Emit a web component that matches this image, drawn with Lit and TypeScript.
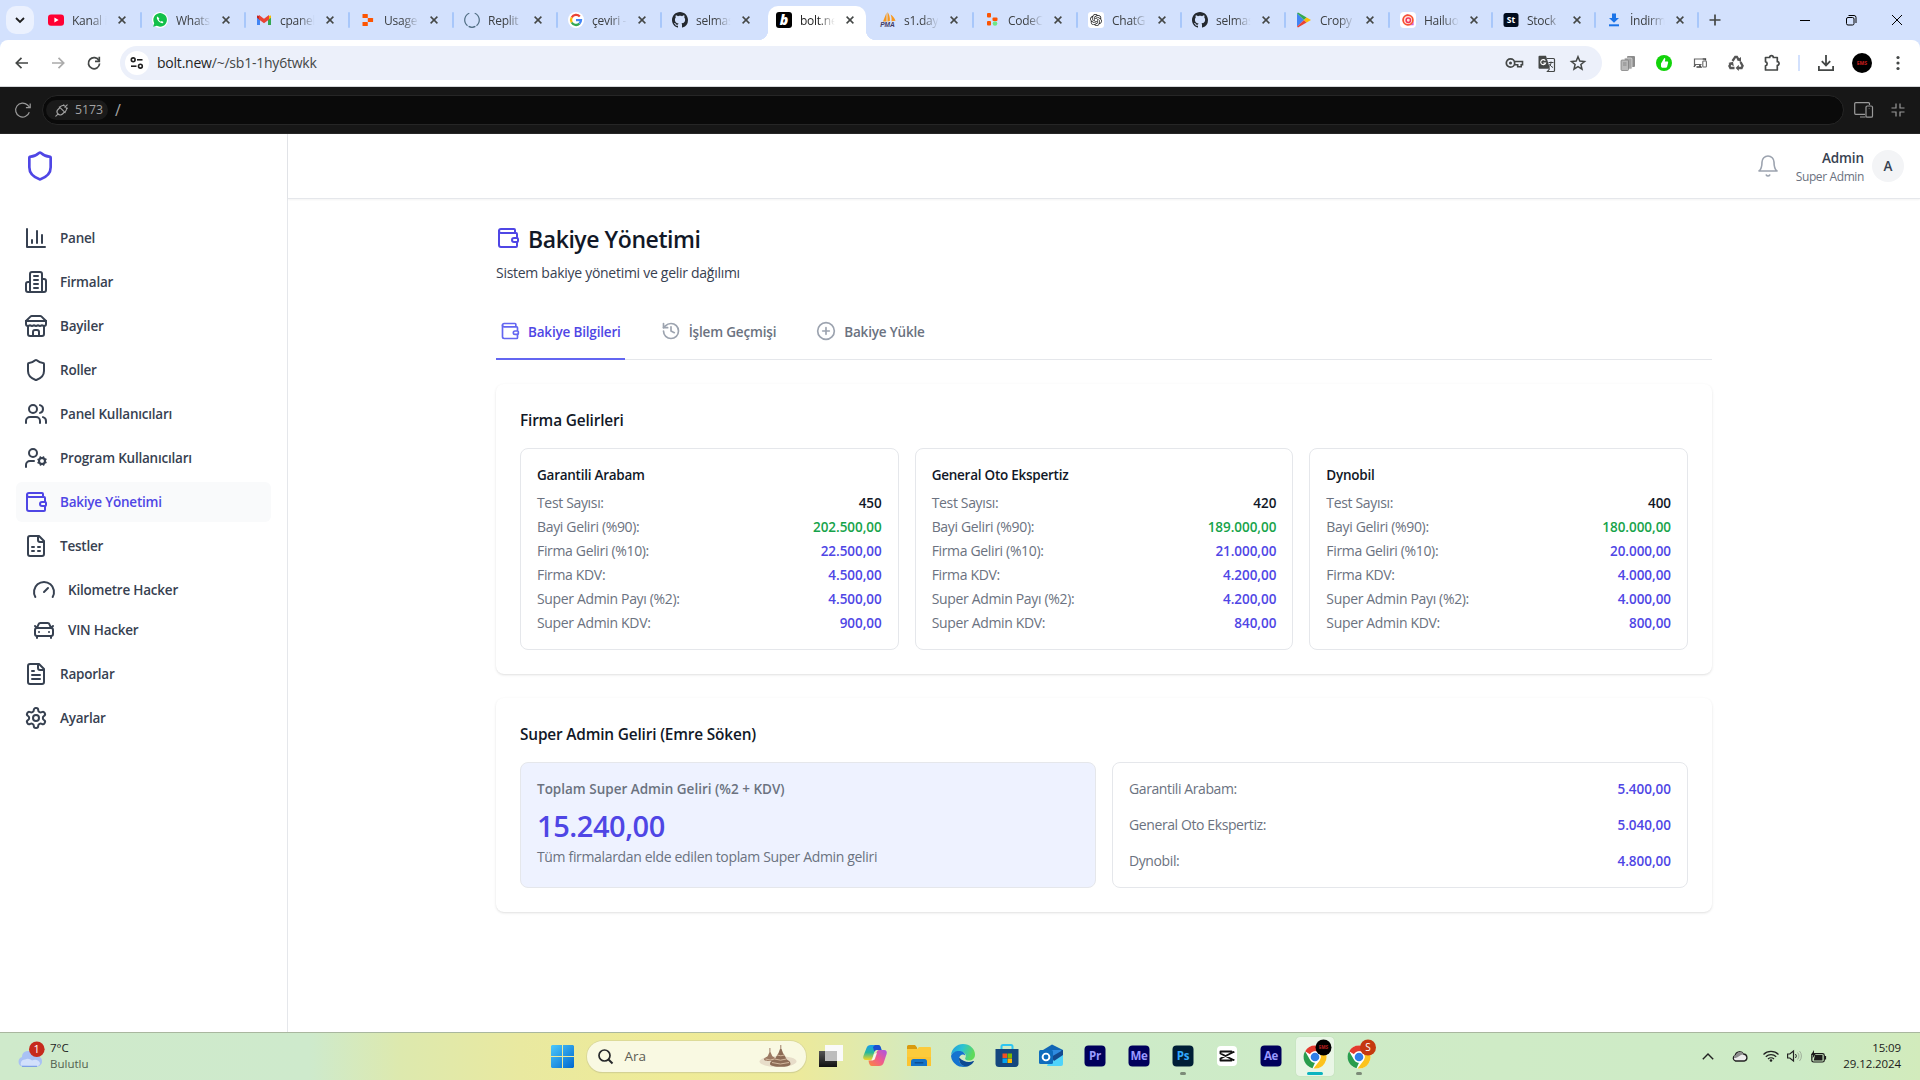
import { LitElement, html, svg, css, nothing } from "lit";
import { customElement, property } from "lit/decorators.js";

/* ---------- line icons (24px grid) ---------- */
const lines: Record<string, any> = {
  wallet: svg`<path d="M19 7V4a1 1 0 0 0-1-1H5a2 2 0 0 0 0 4h15a1 1 0 0 1 1 1v4h-3a2 2 0 0 0 0 4h3a1 1 0 0 0 1-1v-2a1 1 0 0 0-1-1"/><path d="M3 5v14a2 2 0 0 0 2 2h15a1 1 0 0 0 1-1v-4"/>`,
  chart: svg`<path d="M3 3v18h18"/><path d="M18 17V9"/><path d="M13 17V5"/><path d="M8 17v-3"/>`,
  building: svg`<path d="M6 22V4a2 2 0 0 1 2-2h8a2 2 0 0 1 2 2v18Z"/><path d="M6 12H4a2 2 0 0 0-2 2v6a2 2 0 0 0 2 2h2"/><path d="M18 9h2a2 2 0 0 1 2 2v9a2 2 0 0 1-2 2h-2"/><path d="M10 6h4M10 10h4M10 14h4M10 18h4"/>`,
  store: svg`<path d="m2 7 4.41-4.41A2 2 0 0 1 7.83 2h8.34a2 2 0 0 1 1.42.59L22 7"/><path d="M4 12v8a2 2 0 0 0 2 2h12a2 2 0 0 0 2-2v-8"/><path d="M15 22v-4a2 2 0 0 0-2-2h-2a2 2 0 0 0-2 2v4"/><path d="M2 7h20"/><path d="M22 7v3a2 2 0 0 1-2 2a2.7 2.7 0 0 1-1.59-.63.7.7 0 0 0-.82 0A2.7 2.7 0 0 1 16 12a2.7 2.7 0 0 1-1.59-.63.7.7 0 0 0-.82 0A2.7 2.7 0 0 1 12 12a2.7 2.7 0 0 1-1.59-.63.7.7 0 0 0-.82 0A2.7 2.7 0 0 1 8 12a2.7 2.7 0 0 1-1.59-.63.7.7 0 0 0-.82 0A2.7 2.7 0 0 1 4 12a2 2 0 0 1-2-2V7"/>`,
  shield: svg`<path d="M20 13c0 5-3.5 7.5-7.66 8.95a1 1 0 0 1-.67-.01C7.5 20.5 4 18 4 13V6a1 1 0 0 1 1-1c2 0 4.5-1.2 6.24-2.72a1.17 1.17 0 0 1 1.52 0C14.51 3.81 17 5 19 5a1 1 0 0 1 1 1z"/>`,
  users: svg`<path d="M16 21v-2a4 4 0 0 0-4-4H6a4 4 0 0 0-4 4v2"/><circle cx="9" cy="7" r="4"/><path d="M22 21v-2a4 4 0 0 0-3-3.87"/><path d="M16 3.13a4 4 0 0 1 0 7.75"/>`,
  userCog: svg`<circle cx="18" cy="15" r="3"/><circle cx="9" cy="7" r="4"/><path d="M10 15H6a4 4 0 0 0-4 4v2"/><path d="m21.7 16.4-.9-.3M15.2 13.9l-.9-.3M16.6 18.7l.3-.9M19.1 12.2l.3-.9M19.6 18.7l-.4-1M16.8 12.3l-.4-1M14.3 16.6l1-.4M20.7 13.8l1-.4"/>`,
  sheet: svg`<path d="M15 2H6a2 2 0 0 0-2 2v16a2 2 0 0 0 2 2h12a2 2 0 0 0 2-2V7Z"/><path d="M14 2v4a2 2 0 0 0 2 2h4"/><path d="M8 13h2M14 13h2M8 17h2M14 17h2"/>`,
  gauge: svg`<path d="m12 14 4-4"/><path d="M3.34 19a10 10 0 1 1 17.32 0"/>`,
  car: svg`<path d="m21 8-2 2-1.5-3.7A2 2 0 0 0 15.646 5H8.4a2 2 0 0 0-1.903 1.257L5 10 3 8"/><path d="M7 14h.01M17 14h.01"/><rect width="18" height="8" x="3" y="10" rx="2"/><path d="M5 18v2M19 18v2"/>`,
  file: svg`<path d="M15 2H6a2 2 0 0 0-2 2v16a2 2 0 0 0 2 2h12a2 2 0 0 0 2-2V7Z"/><path d="M14 2v4a2 2 0 0 0 2 2h4"/><path d="M10 9H8M16 13H8M16 17H8"/>`,
  cog: svg`<path d="M12.22 2h-.44a2 2 0 0 0-2 2v.18a2 2 0 0 1-1 1.73l-.43.25a2 2 0 0 1-2 0l-.15-.08a2 2 0 0 0-2.73.73l-.22.38a2 2 0 0 0 .73 2.73l.15.1a2 2 0 0 1 1 1.72v.51a2 2 0 0 1-1 1.74l-.15.09a2 2 0 0 0-.73 2.73l.22.38a2 2 0 0 0 2.73.73l.15-.08a2 2 0 0 1 2 0l.43.25a2 2 0 0 1 1 1.73V20a2 2 0 0 0 2 2h.44a2 2 0 0 0 2-2v-.18a2 2 0 0 1 1-1.73l.43-.25a2 2 0 0 1 2 0l.15.08a2 2 0 0 0 2.73-.73l.22-.39a2 2 0 0 0-.73-2.73l-.15-.08a2 2 0 0 1-1-1.74v-.5a2 2 0 0 1 1-1.74l.15-.09a2 2 0 0 0 .73-2.73l-.22-.38a2 2 0 0 0-2.73-.73l-.15.08a2 2 0 0 1-2 0l-.43-.25a2 2 0 0 1-1-1.73V4a2 2 0 0 0-2-2z"/><circle cx="12" cy="12" r="3"/>`,
  bell: svg`<path d="M6 8a6 6 0 0 1 12 0c0 7 3 9 3 9H3s3-2 3-9"/><path d="M10.3 21a1.94 1.94 0 0 0 3.4 0"/>`,
  history: svg`<path d="M3 12a9 9 0 1 0 9-9 9.75 9.75 0 0 0-6.74 2.74L3 8"/><path d="M3 3v5h5"/><path d="M12 7v5l4 2"/>`,
  plusCircle: svg`<circle cx="12" cy="12" r="10"/><path d="M8 12h8M12 8v8"/>`,
};
const line = (name: string, size = 24, width = 2) => html`<svg width=${size} height=${size} viewBox="0 0 24 24" fill="none" stroke="currentColor" stroke-width=${width} stroke-linecap="round" stroke-linejoin="round">${lines[name]}</svg>`;

/* ---------- free-form glyphs, each with its own grid ---------- */
const glyph = (w: number, h: number, body: any) => html`<svg width=${w} height=${h} viewBox="0 0 ${w} ${h}" fill="none">${body}</svg>`;

const github = glyph(16, 16, svg`<path fill="#24292f" d="M8 0C3.58 0 0 3.58 0 8c0 3.54 2.29 6.53 5.47 7.59.4.07.55-.17.55-.38 0-.19-.01-.82-.01-1.49-2.01.37-2.53-.49-2.69-.94-.09-.23-.48-.94-.82-1.13-.28-.15-.68-.52-.01-.53.63-.01 1.08.58 1.23.82.72 1.21 1.87.87 2.33.66.07-.52.28-.87.51-1.07-1.78-.2-3.64-.89-3.64-3.95 0-.87.31-1.59.82-2.15-.08-.2-.36-1.02.08-2.12 0 0 .67-.21 2.2.82.64-.18 1.32-.27 2-.27s1.36.09 2 .27c1.53-1.04 2.2-.82 2.2-.82.44 1.1.16 1.92.08 2.12.51.56.82 1.27.82 2.15 0 3.07-1.87 3.75-3.65 3.95.29.25.54.73.54 1.48 0 1.07-.01 1.93-.01 2.2 0 .21.15.46.55.38A8.01 8.01 0 0 0 16 8c0-4.42-3.58-8-8-8z"/>`);

const favicons: Record<string, any> = {
  youtube: glyph(16, 16, svg`<rect y="2.4" width="16" height="11.4" rx="3" fill="#f03"/><path d="M6.4 5.6v5l4.2-2.5z" fill="#fff"/>`),
  whatsapp: glyph(16, 16, svg`<circle cx="8" cy="8" r="8" fill="#fff"/><path d="M1.2 14.8l1-3.6a6.8 6.8 0 1 1 2.6 2.6z" fill="#12c04a"/><path d="M5.6 4.6c-.9.6-1 1.8-.3 3 1 1.9 2.4 3.1 4.2 3.5 1 .2 1.7-.4 1.9-1.2l-1.7-.9-.8.8c-1-.4-1.8-1.2-2.2-2.2l.7-.8z" fill="#fff"/>`),
  gmail: glyph(16, 16, svg`<path d="M1 4v9h3V7z" fill="#4285f4"/><path d="M12 7v6h3V4z" fill="#34a853"/><path d="M1 3.5v2.3L4 8V4z" fill="#c5221f"/><path d="M12 4v4l3-2.2V3.5z" fill="#fbbc04"/><path d="M3 3l5 3.8L13 3v4.6l-5 3.7-5-3.7z" fill="#ea4335"/>`),
  usage: glyph(16, 16, svg`<g fill="#fd5402"><rect x="2.5" y="2" width="5.3" height="4" rx=".6"/><rect x="7.8" y="6" width="5.3" height="4" rx=".6"/><rect x="2.5" y="10" width="5.3" height="4" rx=".6"/></g>`),
  spinner: glyph(16, 16, svg`<path d="M5.3 1.2a7.3 7.3 0 0 0-1.8 12.5M10.7 1.2a7.3 7.3 0 0 1 1.8 12.5M4.6 14.4a7.3 7.3 0 0 0 6.8 0" stroke="#4d6b80" stroke-width="1.2"/>`),
  google: glyph(16, 16, svg`<circle cx="8" cy="8" r="8" fill="#fff"/><g fill="none" stroke-width="2.3"><path d="M11.8 4.5A5 5 0 0 0 3.7 5.5" stroke="#ea4335"/><path d="M3.7 5.5a5 5 0 0 0 0 5" stroke="#fbbc05"/><path d="M3.7 10.5a5 5 0 0 0 7.7 1.2" stroke="#34a853"/><path d="M8 8.1h5a5 5 0 0 1-1.6 3.6" stroke="#4285f4"/></g>`),
  github,
  bolt: glyph(16, 16, svg`<rect width="16" height="16" rx="3" fill="#000"/><text x="8" y="13" text-anchor="middle" font-family="Open Sans" font-style="italic" font-weight="800" font-size="14" fill="#fff">b</text>`),
  pma: glyph(16, 16, svg`<path d="M6.5.8L3 9.5h3.5zM7.5 0v9.5l2.4-.4C10.2 5 9 2 7.5 0zM10.5 2.5c1 2 1.3 4 1 6.7l4-.5c-1-3-3-5-5-6.2z" fill="#f8981d"/><text x="7.5" y="15.4" text-anchor="middle" font-family="Liberation Sans" font-style="italic" font-weight="700" font-size="6.6" fill="#3f3a66">PMA</text>`),
  codec: glyph(16, 16, svg`<g fill="#fd5402"><rect x="3" y="1" width="4" height="4.5" rx="1"/><rect x="8.5" y="5.5" width="5" height="3.5" rx="1"/><rect x="3" y="9" width="4" height="4.5" rx="1"/></g><circle cx="11" cy="11.5" r="2.3" fill="#6ee787"/>`),
  openai: html`<svg width="16" height="16" viewBox="-4 -4 32 32"><rect x="-4" y="-4" width="32" height="32" rx="6" fill="#fff"/><path fill="#222" d="M22.2819 9.8211a5.9847 5.9847 0 0 0-.5157-4.9108 6.0462 6.0462 0 0 0-6.5098-2.9A6.0651 6.0651 0 0 0 4.9807 4.1818a5.9847 5.9847 0 0 0-3.9977 2.9 6.0462 6.0462 0 0 0 .7427 7.0966 5.98 5.98 0 0 0 .511 4.9107 6.051 6.051 0 0 0 6.5146 2.9001A5.9847 5.9847 0 0 0 13.2599 24a6.0557 6.0557 0 0 0 5.7718-4.2058 5.9894 5.9894 0 0 0 3.9977-2.9001 6.0557 6.0557 0 0 0-.7475-7.0729zm-9.022 12.6081a4.4755 4.4755 0 0 1-2.8764-1.0408l.1419-.0804 4.7783-2.7582a.7948.7948 0 0 0 .3927-.6813v-6.7369l2.02 1.1686a.071.071 0 0 1 .038.052v5.5826a4.504 4.504 0 0 1-4.4945 4.4944zm-9.6607-4.1254a4.4708 4.4708 0 0 1-.5346-3.0137l.142.0852 4.783 2.7582a.7712.7712 0 0 0 .7806 0l5.8428-3.3685v2.3324a.0804.0804 0 0 1-.0332.0615L9.74 19.9502a4.4992 4.4992 0 0 1-6.1408-1.6464zM2.3408 7.8956a4.485 4.485 0 0 1 2.3655-1.9728V11.6a.7664.7664 0 0 0 .3879.6765l5.8144 3.3543-2.0201 1.1685a.0757.0757 0 0 1-.071 0l-4.8303-2.7865A4.504 4.504 0 0 1 2.3408 7.872zm16.5963 3.8558L13.1038 8.364 15.1192 7.2a.0757.0757 0 0 1 .071 0l4.8303 2.7913a4.4944 4.4944 0 0 1-.6765 8.1042v-5.6772a.79.79 0 0 0-.407-.667zm2.0107-3.0231l-.142-.0852-4.7735-2.7818a.7759.7759 0 0 0-.7854 0L9.409 9.2297V6.8974a.0662.0662 0 0 1 .0284-.0615l4.8303-2.7866a4.4992 4.4992 0 0 1 6.6802 4.66zM8.3065 12.863l-2.02-1.1638a.0804.0804 0 0 1-.038-.0567V6.0742a4.4992 4.4992 0 0 1 7.3757-3.4537l-.142.0805L8.704 5.459a.7948.7948 0 0 0-.3927.6813zm1.0976-2.3654l2.602-1.4998 2.6069 1.4998v2.9994l-2.5974 1.4997-2.6067-1.4997Z"/></svg>`,
  play: glyph(16, 16, svg`<path d="M1 1.2v13.6L8 8z" fill="#4285f4"/><path d="M1 1.2L8 8l2.6-2.6L2 .6z" fill="#34a853"/><path d="M1 14.8L8 8l2.6 2.6L2 15.4z" fill="#ea4335"/><path d="M10.6 5.4L8 8l2.6 2.6L15 8z" fill="#fbbc04"/>`),
  hailuo: glyph(16, 16, svg`<rect width="16" height="16" rx="4" fill="#fff"/><path d="M8 2.3a5.5 5.5 0 1 0 5.6 5.5v5.5H8" fill="#d65be0"/><circle cx="8" cy="8" r="4.9" stroke="#f8532d" stroke-width="1.7" fill="#ffe3dc"/><circle cx="8.3" cy="8.3" r="2.2" stroke="#f0355b" stroke-width="1.5"/>`),
  stock: glyph(16, 16, svg`<rect y="1" x=".5" width="15" height="14" rx="2.5" fill="#000b1d"/><text x="8" y="11.4" text-anchor="middle" font-family="Open Sans" font-weight="700" font-size="8.5" fill="#fff">St</text>`),
  download: glyph(16, 16, svg`<path d="M6 1.5h4V6h3l-5 4.8L3 6h3z" fill="#1a73e8"/><path d="M3 12.3h10v2H3z" fill="#1a73e8"/>`),
};

const chrome = svg`<circle cx="12" cy="12" r="11.5" fill="#fff"/><path d="M12 .5a11.5 11.5 0 0 1 10 5.8H12a5.8 5.8 0 0 0-5 3L2.1 6.2A11.5 11.5 0 0 1 12 .5z" fill="#e33b2e"/><path d="M2.1 6.2L7 14.8a5.8 5.8 0 0 0 5 3l-2.5 5.4A11.5 11.5 0 0 1 2.1 6.2z" fill="#2a9d4d"/><path d="M22 6.3A11.5 11.5 0 0 1 10.5 23.4L17 14.9a5.8 5.8 0 0 0 0-5.9l-2-2.7z" fill="#fcc31e"/><circle cx="12" cy="12" r="5.4" fill="#fff"/><circle cx="12" cy="12" r="4.3" fill="#2f7de9"/>`;

const adobe = (label: string, bg: string, fg: string) => glyph(22, 22, svg`<rect x=".5" y=".5" width="21" height="21" rx="4" fill=${bg}/><text x="11" y="15" text-anchor="middle" font-family="Open Sans" font-weight="700" font-size="11.5" fill=${fg} letter-spacing="-.3">${label}</text>`);

const apps: any[] = [
  { icon: glyph(24, 24, svg`<defs><linearGradient id="tv" x1="0" y1="0" x2="0" y2="1"><stop stop-color="#555"/><stop offset="1" stop-color="#111"/></linearGradient></defs><rect y="7" width="18" height="16" fill="url(#tv)"/><rect x="6" y="1" width="18" height="16" fill="#fafafa"/><rect x="6" y="7" width="12" height="10" fill="#bdbdbd"/>`) },
  { icon: glyph(24, 24, svg`<defs><linearGradient id="cpa" x1="0" y1="0" x2="0" y2="1"><stop stop-color="#1a9bf0"/><stop offset=".5" stop-color="#27b89a"/><stop offset="1" stop-color="#f6d520"/></linearGradient><linearGradient id="cpb" x1="1" y1="0" x2="0" y2="1"><stop stop-color="#a855e8"/><stop offset=".5" stop-color="#ef5b8d"/><stop offset="1" stop-color="#fb8a3c"/></linearGradient></defs><path d="M8 1h7c2 0 2.5 1.5 3 3l.5 2H14c-2 0-2.5 1-3 3l-1.5 5c-.5 1.5-1.2 2-3 2H3c-2.5 0-3.3-1.7-2.6-4L3.5 4C4.2 2 5.5 1 8 1z" fill="url(#cpa)"/><path d="M12 1h3c2 0 2.5 1.5 3 3l.5 2H14c-1.5 0-2.2.6-2.7 2L10 3z" fill="#1c4fd0"/><path d="M16 22H9c-2 0-2.5-1.5-3-3l-.5-2.5H9c2 0 2.5-1 3-3L13.8 8c.5-1.5 1.2-2 3-2H21c2.5 0 3.3 1.7 2.6 4l-3 9c-.7 2-2.1 3-4.6 3z" fill="url(#cpb)"/><path d="M11 10l3-1-2.3 6.5-3 1z" fill="#fff" opacity=".75"/>`) },
  { icon: glyph(24, 24, svg`<path d="M0 2.5A1.5 1.5 0 0 1 1.5 1H8l2 2.5V6H0z" fill="#d99a0d"/><path d="M0 5h10l2-2h11a1 1 0 0 1 1 1v18H0z" fill="#fccb3c"/><path d="M0 13h24v9H0z" fill="#fbc02a" opacity=".6"/><path d="M4 22v-4.500A2.500 2.500 0 0 1 6.500 15h11a2.500 2.500 0 0 1 2.500 2.500V22z" fill="#1473c8"/><rect x="7.500" y="18" width="9" height="1.500" rx=".7" fill="#0d4f94"/>`) },
  { icon: glyph(24, 24, svg`<defs><linearGradient id="ed" x1="0" y1="0" x2="1" y2=".3"><stop stop-color="#2199dd"/><stop offset=".5" stop-color="#2cc3d2"/><stop offset="1" stop-color="#5fda5a"/></linearGradient></defs><path d="M0 11C1 4 6 0 12 0c7 0 12 5 12 10.500 0 4-3 6-6 6-3.500 0-4.500-1.500-3.500-3 1.500-3-1.500-6-5.500-6C4.500 7.500 1.500 9 0 11z" fill="url(#ed)"/><path d="M0 12c1-3 4-5 8-5 3.500 0 6.200 2 6.200 4.500-2-2-6.200-.5-6.200 3.500 0 4.500 4 7.800 8.500 7A12 12 0 0 1 0 12z" fill="#1473d0"/><path d="M8.200 13.500c-1 4.500 2.800 10 9 8.700 2.600-1 4.500-2.600 5.700-4.600.3-.6-.2-.8-.7-.5-4.200 2-10.400.7-14-3.600z" fill="#0c4a94"/>`) },
  { icon: glyph(24, 24, svg`<path d="M6.500 6V2.500A1.500 1.500 0 0 1 8 1h8a1.500 1.500 0 0 1 1.500 1.500V6" stroke="#2ec5f2" stroke-width="2"/><path d="M.5 5h23v14.500A3.500 3.500 0 0 1 20 23H4a3.500 3.500 0 0 1-3.500-3.500z" fill="#14477e"/><path d="M7.500 9.500H12V14H7.500z" fill="#f25022"/><path d="M12.500 9.500H17V14h-4.500z" fill="#7fba00"/><path d="M7.500 14.500H12V19H7.500z" fill="#00a4ef"/><path d="M12.500 14.500H17V19h-4.500z" fill="#ffb900"/>`) },
  { icon: glyph(24, 24, svg`<path d="M4 6l9-5.500L24 6v4H4z" fill="#1066b5"/><path d="M4 6h18v9H4z" fill="#2f8be0"/><path d="M10 17L24 7.500V20a2 2 0 0 1-2 2H8z" fill="#4fd3fa"/><path d="M12 13l12-7v5l-9 6z" fill="#144a8e"/><rect y="6" width="14" height="14" rx="1.500" fill="#0f6cbd"/><circle cx="7" cy="13" r="3.400" stroke="#fff" stroke-width="1.900"/>`) },
  { icon: adobe("Pr", "#00005b", "#9999ff") },
  { icon: adobe("Me", "#00005b", "#9999ff") },
  { icon: adobe("Ps", "#001e36", "#31a8ff"), running: true },
  { icon: glyph(22, 22, svg`<rect x="1" y="1" width="20" height="20" rx="4" fill="#fff"/><path d="M15.500 8V6.500h-11v2l13 6.500v-1M15.500 14v1.500h-11v-2l13-6.500v1" stroke="#111" stroke-width="1.900" stroke-linejoin="round"/>`) },
  { icon: adobe("Ae", "#00005b", "#9999ff") },
  { icon: glyph(30, 30, svg`<g transform="translate(3 4)">${chrome}</g><circle cx="23.500" cy="6.500" r="8" fill="#000"/><text x="23.500" y="8.300" text-anchor="middle" font-family="Open Sans" font-weight="800" font-size="4.500" fill="#a01c1c">EMS</text>`), active: true },
  { icon: glyph(30, 30, svg`<g transform="translate(3 4)">${chrome}</g><circle cx="24" cy="6.500" r="8" fill="#c5380f"/><text x="24" y="10.200" text-anchor="middle" font-family="Open Sans" font-size="10" fill="#fff">S</text>`), running: true },
];

const tabs = [
  ["youtube", "Kanal i"], ["whatsapp", "Whats"], ["gmail", "cpanel"], ["usage", "Usage"], ["spinner", "Replit"],
  ["google", "çeviri -"], ["github", "selmas"], ["bolt", "bolt.ne"], ["pma", "s1.day"], ["codec", "CodeC"], ["openai", "ChatG"],
  ["github", "selmas"], ["play", "Cropy"], ["hailuo", "Hailuo"], ["stock", "Stock"], ["download", "İndirm"],
];

const fonts = css`
  :host { box-sizing: border-box; font-family: "Open Sans", "Noto Sans", sans-serif; font-stretch: 92%; }
  * { box-sizing: border-box; }
  svg { display: block; flex: none; overflow: visible; }
`;

@customElement("browser-chrome")
class BrowserChrome extends LitElement {
  static styles = [fonts, css`
    :host { display: block; flex: none; }
    .strip { height: 40px; background: #d3e1fd; display: flex; padding-left: 6px; align-items: flex-end; }
    .search { width: 28px; height: 28px; border-radius: 10px; background: #ebf1fe; display: grid; place-items: center; align-self: center; margin-right: 4px; }
    .tab { position: relative; width: 104px; height: 34px; display: flex; align-items: center; padding: 0 0 6px 10px; color: #3d4043; flex: none; }
    .tab.slim { width: 103px; }
    .label { width: 37px; margin: 1px 0 0 8px; font-size: 12px; line-height: 16px; overflow: hidden; white-space: nowrap; letter-spacing: -.25px; -webkit-mask-image: linear-gradient(90deg, #000 50%, transparent 94%); mask-image: linear-gradient(90deg, #000 50%, transparent 94%); }
    .x { margin-left: 8.5px; }
    .bar { width: 2px; height: 16px; background: #a8c7fa; margin-left: auto; border-radius: 1px; }
    .active { color: #1f1f1f; }
    .active::before { content: ""; position: absolute; left: 2px; right: 4px; top: 0; bottom: 0; background: #fff; border-radius: 10px 10px 0 0; }
    .active::after { content: ""; position: absolute; left: -8px; right: -6px; bottom: 0; height: 10px; background: radial-gradient(circle at 0 0, transparent 10px, #fff 10.5px) left / 10px 10px no-repeat, radial-gradient(circle at 100% 0, transparent 10px, #fff 10.5px) right / 10px 10px no-repeat; }
    .active > * { position: relative; }
    .plus { height: 34px; padding: 8px 0 0 10px; }
    .window { margin-left: auto; display: flex; height: 40px; }
    .window span { width: 46px; display: grid; place-items: center; }
    .tools { background: #d3e1fd; }
    .toolbar { height: 47px; background: #fff; border-radius: 8px 8px 0 0; border-bottom: 1px solid #d5d7da; display: flex; align-items: center; padding: 0 4px; }
    .btn { width: 36px; display: grid; place-items: center; flex: none; }
    .omni { flex: 1; height: 34px; border-radius: 17px; background: #ecf0fa; display: flex; align-items: center; padding: 0 8px 0 5px; margin: 0 8px 0 8px; }
    .site { width: 24px; height: 24px; border-radius: 50%; background: #fff; display: grid; place-items: center; margin-right: 8px; }
    .url { font-size: 14px; line-height: 20px; margin-top: -1px; color: #444746; flex: 1; letter-spacing: -.22px; }
    .url b { font-weight: 400; color: #1f1f1f; }
    .in { width: 32px; display: grid; place-items: center; }
    .sep { width: 2px; height: 16px; background: #d3e1fd; margin: 0 8px; }
    .preview { height: 47px; background: #171717; border-bottom: 1px solid #262626; display: flex; align-items: center; padding: 0 5px 0 10px; color: #9a9a9a; }
    .address { flex: 1; height: 30px; border-radius: 15px; border: 1px solid #262626; background: #0a0a0a; display: flex; align-items: center; padding-left: 3px; margin: 0 3px 0 7px; }
    .port { width: 62px; height: 20px; border-radius: 10px; background: #1a1a1a; display: flex; align-items: center; padding-left: 9px; gap: 7px; font-size: 12.3px; color: #a3a3a3; }
    .port span { margin-top: -1px; }
    .slash { margin: -1px 0 0 7px; font-size: 16px; color: #a3a3a3; }
    .pbtn { width: 25px; display: grid; place-items: center; }
    .pbtn.wide { width: 34px; }
  `];
  render() {
    const k = "#444746";
    return html`
      <div class="strip">
        <div class="search">${glyph(10, 6, svg`<path d="M1 1l4 4 4-4" stroke="#1f1f1f" stroke-width="1.8"/>`)}</div>
        ${tabs.map(([icon, label], i) => html`<div class="tab ${i === 7 ? "active" : ""} ${i > 12 ? "slim" : ""}">
          ${favicons[icon]}<span class="label">${label}</span>
          <span class="x">${glyph(8, 8, svg`<path d="M.6.6l6.8 6.8M7.4.6L.6 7.4" stroke=${k} stroke-width="1.5"/>`)}</span>
          ${i === 6 || i === 7 ? nothing : html`<span class="bar"></span>`}</div>`)}
        <div class="plus">${glyph(12, 12, svg`<path d="M6 .5v11M.5 6h11" stroke=${k} stroke-width="1.7"/>`)}</div>
        <div class="window">
          <span>${glyph(10, 10, svg`<path d="M0 5.5h10" stroke="#000"/>`)}</span>
          <span>${glyph(10, 10, svg`<rect x=".5" y="2.5" width="7.5" height="7.5" rx="1.5" stroke="#000"/><path d="M2.5.5H8A2 2 0 0 1 10 2.5V8" stroke="#000"/>`)}</span>
          <span>${glyph(10, 10, svg`<path d="M0 0l10 10M10 0L0 10" stroke="#000"/>`)}</span>
        </div>
      </div>
      <div class="tools"><div class="toolbar">
        <div class="btn">${glyph(14, 12, svg`<path d="M13 6H1.5M6.5.8L1.3 6l5.2 5.2" stroke=${k} stroke-width="1.7"/>`)}</div>
        <div class="btn">${glyph(14, 12, svg`<path d="M1 6h11.5M7.5.8L12.7 6l-5.2 5.2" stroke="#ababab" stroke-width="1.7"/>`)}</div>
        <div class="btn">${glyph(14, 14, svg`<path d="M12 4.6A5.6 5.6 0 1 0 12.6 7.5" stroke=${k} stroke-width="1.7"/><path d="M12.3.8v4.5H8" stroke=${k} stroke-width="1.7"/>`)}</div>
        <div class="omni">
          <span class="site">${glyph(14, 12, svg`<g stroke="#1f1f1f" stroke-width="1.6"><circle cx="3.2" cy="2.8" r="1.9"/><path d="M7 2.8h5.5"/><circle cx="10.4" cy="9.2" r="1.9"/><path d="M1 9.2h5.5"/></g>`)}</span>
          <span class="url"><b>bolt.new</b>/~/sb1-1hy6twkk</span>
          <span class="in">${glyph(18, 12, svg`<circle cx="5.5" cy="6" r="4.2" stroke=${k} stroke-width="1.7"/><circle cx="5.5" cy="6" r="1.5" fill=${k}/><path d="M9.5 4.5h8v3.3h-1.3v2h-3.5v-2h-3" stroke=${k} stroke-width="1.6"/>`)}</span>
          <span class="in">${glyph(17, 17, svg`<path d="M1.5.8H8l4 13H1.5a1 1 0 0 1-1-1v-11a1 1 0 0 1 1-1z" fill=${k}/><path d="M9 3.5h6.5a1 1 0 0 1 1 1v11a1 1 0 0 1-1 1H9.5l2-2.5" stroke=${k} stroke-width="1.2"/><path d="M10.5 7.5h5M13 6.5v1c0 2-1 3.5-2.3 4.5M11.5 9c.8 1.7 2 2.8 3.5 3.5" stroke=${k} stroke-width="1"/><path d="M7.3 5.7A2.5 2.5 0 1 0 7.6 8H5.3" stroke="#fff" stroke-width="1.1"/>`)}</span>
          <span class="in">${glyph(16, 16, svg`<path d="M8 1.8l1.8 4.3 4.7.4-3.6 3 1.1 4.6L8 11.7l-4 2.4 1.1-4.6-3.6-3 4.7-.4z" stroke=${k} stroke-width="1.5"/>`)}</span>
        </div>
        <div class="btn">${glyph(16, 16, svg`<rect x="7" y="1" width="8" height="11" rx="1" fill="#8b8b8b"/><rect x="4.5" y="3" width="7.5" height="11" rx="1" fill="#a4a4a4" stroke="#eee" stroke-width=".6"/><rect x="1" y="5" width="7.5" height="10.5" rx="1" fill="#b9b9b9" stroke="#777" stroke-width=".7"/><path d="M3 8h3.5M3 10h3.5" stroke="#888"/>`)}</div>
        <div class="btn">${glyph(16, 16, svg`<circle cx="8" cy="8" r="8" fill="#12d30a"/><path d="M5 8.5L8.3 3c.9 0 1.2.8.9 1.7L8.8 6.6h2.6c.7 0 .9.6.7 1.2l-1 4c-.2.7-.6 1-1.3 1H7C5.6 12.8 5 12 5 11z" fill="#fff"/>`)}</div>
        <div class="btn">${glyph(14, 10, svg`<path d="M9.500 1H1.500v5.500H8.500" stroke="#666" stroke-width="1.2"/><path d="M.8 8.800L2.500 7M3.500 9h4.500L6.500 7M9.500 1h3v1.500" stroke="#444" stroke-width="1.3"/><rect x="9.800" y="3" width="3.600" height="6" rx=".8" stroke="#666" stroke-width="1.1"/>`)}</div>
        <div class="btn">${glyph(16, 16, svg`<g stroke="#555" stroke-width="2.3"><path d="M4.5 6L7.300 1.800h1.600l1.900 3.200"/><path d="M12.5 7l2.100 3.900-1 2.100H9.500"/><path d="M6.5 13H2.400l-1-2 1.600-3"/></g><path d="M13 2v5L8.600 5zM10.800 9.800v6.200L7.600 13zM.3 8l4.700-1.200.8 4.500z" fill="#555"/>`)}</div>
        <div class="btn">${glyph(16, 16, svg`<path d="M1.500 2.500h4.200a1.800 1.800 0 0 1 3.600 0h4v4.200a1.800 1.800 0 0 1 0 3.600v4.700H1.500v-4.200c2.200-.3 2.200-3.700 0-4z" stroke=${k} stroke-width="1.7" stroke-linejoin="round"/>`)}</div>
        <span class="sep"></span>
        <div class="btn">${glyph(16, 16, svg`<path d="M8 0v10M3.800 6.200L8 10.400l4.200-4.200M.9 11v4.100h14.200V11" stroke=${k} stroke-width="1.8"/>`)}</div>
        <div class="btn">${glyph(20, 20, svg`<circle cx="10" cy="10" r="10" fill="#000"/><text x="10" y="12" text-anchor="middle" font-family="Open Sans" font-weight="800" font-size="5" fill="#b01a1a">EMS</text>`)}</div>
        <div class="btn">${glyph(4, 16, svg`<g fill=${k}><circle cx="2" cy="2.5" r="1.6"/><circle cx="2" cy="8" r="1.6"/><circle cx="2" cy="13.5" r="1.6"/></g>`)}</div>
      </div></div>
      <div class="preview">
        <span class="pbtn">${glyph(18, 16, svg`<path d="M15.3 10.3A7 7 0 1 1 13.500 3l2.300 2.300" stroke="currentColor" stroke-width="1.2"/><path d="M16.200 1.500v4.200h-4.300" stroke="currentColor" stroke-width="1.2"/>`)}</span>
        <div class="address"><span class="port">${glyph(13, 13, svg`<g stroke="currentColor" stroke-width="1.1" stroke-linecap="round"><path d="M.8 12.2l2.4-2.4M4.3 2.8l5.9 5.9M5 3.500L3 5.500a3 3 0 0 0 4.500 4.500l2-2M5.500 2.500L7 1.600c1.500-.9 2.500-.3 3.500.9s1.600 2 .8 3.500l-.9 1.500M9.800 3.200l2.400-2.400M8 1.600l.8-.8M11.600 5l.8-.8"/></g>`)}<span>5173</span></span><span class="slash">/</span></div>
        <span class="pbtn wide">${glyph(20, 16, svg`<g stroke="currentColor" stroke-width="1.2"><path d="M15.500 3V1.700a1 1 0 0 0-1-1H1.700a1 1 0 0 0-1 1v9.600a1 1 0 0 0 1 1H11M6 15h5.500"/><rect x="12" y="4" width="6.500" height="11.200" rx="1.300"/><path d="M15.200 6.500v.5"/></g>`)}</span>
        <span class="pbtn wide">${glyph(14, 14, svg`<path d="M5 .5V5H.5M9 .5V5h4.5M5 13.5V9H.5M9 13.5V9h4.5" stroke="currentColor" stroke-width="1.2"/>`)}</span>
      </div>`;
  }
}

@customElement("side-nav")
class SideNav extends LitElement {
  static styles = [fonts, css`
    :host { display: block; width: 288px; flex: none; border-right: 1px solid #e5e7eb; background: #fff; }
    .logo { height: 64px; display: flex; align-items: center; padding-left: 24px; color: #4f46e5; }
    nav { padding: 20px 16px; display: flex; flex-direction: column; gap: 4px; }
    .item { height: 40px; border-radius: 6px; display: flex; align-items: center; gap: 12px; padding-left: 8px; color: #374151; font-size: 13.5px; line-height: 20px; font-weight: 600; letter-spacing: -.22px; }
    .item.on { background: #f9fafb; color: #4f46e5; }
    .sub { padding-left: 8px; }
  `];
  item(icon: string, label: string, on = false) {
    return html`<div class="item ${on ? "on" : ""}">${line(icon)}<span>${label}</span></div>`;
  }
  render() {
    return html`<div class="logo"><div>${line("shield", 32)}</div></div>
      <nav>
        ${this.item("chart", "Panel")}${this.item("building", "Firmalar")}${this.item("store", "Bayiler")}${this.item("shield", "Roller")}
        ${this.item("users", "Panel Kullanıcıları")}${this.item("userCog", "Program Kullanıcıları")}${this.item("wallet", "Bakiye Yönetimi", true)}${this.item("sheet", "Testler")}
        <div class="sub">${this.item("gauge", "Kilometre Hacker")}${this.item("car", "VIN Hacker")}</div>
        ${this.item("file", "Raporlar")}${this.item("cog", "Ayarlar")}
      </nav>`;
  }
}

@customElement("company-card")
class CompanyCard extends LitElement {
  @property() name = "";
  @property({ attribute: false }) values: string[] = [];
  static styles = [fonts, css`
    :host { display: block; border: 1px solid #e5e7eb; border-radius: 8px; padding: 14px 16px 14px; font-size: 14px; }
    h3 { margin: 0 0 4px; font-size: 13.5px; line-height: 24px; font-weight: 600; color: #111827; letter-spacing: -.25px; }
    .row { display: flex; justify-content: space-between; line-height: 24px; color: #6b7280; letter-spacing: -.34px; }
    .row b { font-size: 13.5px; font-weight: 600; color: #4f46e5; letter-spacing: -.05px; }
    .row.count b { color: #111827; }
    .row.dealer b { color: #16a34a; }
  `];
  render() {
    const labels = ["Test Sayısı:", "Bayi Geliri (%90):", "Firma Geliri (%10):", "Firma KDV:", "Super Admin Payı (%2):", "Super Admin KDV:"];
    return html`<h3>${this.name}</h3>${labels.map((l, i) => html`<div class="row ${["count", "dealer"][i] ?? ""}"><span>${l}</span><b>${this.values[i]}</b></div>`)}`;
  }
}

@customElement("balance-page")
class BalancePage extends LitElement {
  static styles = [fonts, css`
    :host { flex: 1; display: flex; flex-direction: column; background: #fff; }
    header { height: 65px; border-bottom: 1px solid #e5e7eb; box-shadow: 0 1px 2px rgba(0,0,0,.05); display: flex; align-items: center; justify-content: flex-end; padding-right: 16px; color: #9ca3af; }
    .who { margin: 0 8px 0 16px; text-align: right; }
    .who b { display: block; font-size: 13.5px; line-height: 20px; font-weight: 600; color: #374151; letter-spacing: -.1px; }
    .who small { display: block; font-size: 12px; line-height: 17px; color: #6b7280; letter-spacing: -.38px; }
    .avatar { width: 32px; height: 32px; border-radius: 50%; background: #f3f4f6; color: #374151; font-size: 13.5px; font-weight: 600; display: grid; place-items: center; }
    main { width: 1280px; margin: 0 auto; padding: 24px 32px 0; }
    h1 { margin: 0; display: flex; align-items: center; gap: 8px; height: 32px; font-size: 23px; font-weight: 600; color: #111827; letter-spacing: -.43px; }
    h1 svg { color: #4f46e5; margin-top: -2px; }
    h1 span { margin-top: -1px; }
    .lead { margin: 8px 0 0; font-size: 14px; line-height: 20px; color: #374151; letter-spacing: -.28px; }
    .tabs { display: flex; gap: 32px; margin-top: 23px; border-bottom: 1px solid #e5e7eb; height: 54px; }
    .tab { height: 54px; border-bottom: 2px solid transparent; padding: 0 4px 2px; display: flex; align-items: center; gap: 8px; font-size: 13.5px; line-height: 20px; font-weight: 600; color: #6b7280; letter-spacing: -.18px; }
    .tab span { padding-top: 2px; }
    .tab svg { color: #9ca3af; }
    .tab.on { border-color: #6366f1; color: #4f46e5; }
    .tab.on svg { color: #6366f1; }
    section { margin-top: 24px; height: 290px; border-radius: 8px; padding: 24px; background: #fff; box-shadow: 0 1px 3px rgba(0,0,0,.1), 0 1px 2px -1px rgba(0,0,0,.1); }
    section.admin { height: 214px; }
    h2 { margin: 0 0 15px; padding-top: 1px; font-size: 15.4px; line-height: 24px; font-weight: 600; color: #111827; letter-spacing: -.17px; }
    .three { display: grid; grid-template-columns: repeat(3, 1fr); gap: 16px; }
    .two { display: grid; grid-template-columns: 1fr 1fr; gap: 16px; }
    .box { border: 1px solid #e5e7eb; border-radius: 8px; height: 126px; padding: 16px; font-size: 14px; line-height: 20px; color: #6b7280; letter-spacing: -.34px; }
    .total { background: #eef2ff; }
    .total b { display: block; font-size: 13.5px; font-weight: 600; letter-spacing: 0; }
    .total strong { display: block; margin: 9px 0 3px; font-size: 29px; line-height: 36px; font-weight: 600; color: #4f46e5; letter-spacing: -.45px; }
    .split { display: flex; flex-direction: column; gap: 16px; letter-spacing: -.4px; }
    .split div { display: flex; justify-content: space-between; }
    .split b { font-size: 13.5px; font-weight: 600; color: #4f46e5; letter-spacing: -.02px; }
  `];
  render() {
    return html`
      <header>${line("bell", 24, 1.6)}<div class="who"><b>Admin</b><small>Super Admin</small></div><div class="avatar">A</div></header>
      <main>
        <h1>${line("wallet")}<span>Bakiye Yönetimi</span></h1>
        <p class="lead">Sistem bakiye yönetimi ve gelir dağılımı</p>
        <div class="tabs">
          <div class="tab on">${line("wallet", 20)}<span>Bakiye Bilgileri</span></div>
          <div class="tab">${line("history", 20)}<span>İşlem Geçmişi</span></div>
          <div class="tab">${line("plusCircle", 20)}<span>Bakiye Yükle</span></div>
        </div>
        <section>
          <h2>Firma Gelirleri</h2>
          <div class="three">
            <company-card name="Garantili Arabam" .values=${["450", "202.500,00", "22.500,00", "4.500,00", "4.500,00", "900,00"]}></company-card>
            <company-card name="General Oto Ekspertiz" .values=${["420", "189.000,00", "21.000,00", "4.200,00", "4.200,00", "840,00"]}></company-card>
            <company-card name="Dynobil" .values=${["400", "180.000,00", "20.000,00", "4.000,00", "4.000,00", "800,00"]}></company-card>
          </div>
        </section>
        <section class="admin">
          <h2>Super Admin Geliri (Emre Söken)</h2>
          <div class="two">
            <div class="box total"><b>Toplam Super Admin Geliri (%2 + KDV)</b><strong>15.240,00</strong><span>Tüm firmalardan elde edilen toplam Super Admin geliri</span></div>
            <div class="box split">
              <div><span>Garantili Arabam:</span><b>5.400,00</b></div>
              <div><span>General Oto Ekspertiz:</span><b>5.040,00</b></div>
              <div><span>Dynobil:</span><b>4.800,00</b></div>
            </div>
          </div>
        </section>
      </main>`;
  }
}

@customElement("task-bar")
class TaskBar extends LitElement {
  static styles = [fonts, css`
    :host { display: flex; height: 48px; flex: none; align-items: center; border-top: 1px solid #a9b79f; background: linear-gradient(90deg, #cfeacb 0, #ceeacc 310px, #dde9ae 400px, #e9e9a0 520px, #efeb97 680px, #ecea9c 800px, #e3eaa9 850px, #d3eac0 920px, #cdebc8 1100px, #cfebc6 1500px, #cdebc6 1800px, #d2ebbc 1920px); }
    .weather { display: flex; width: 540px; padding: 0 0 2px 18px; gap: 8px; align-items: center; font-size: 11.5px; line-height: 16px; color: #1c1c1c; }
    .weather small { display: block; font-size: 11.5px; color: #52604f; }
    .start { width: 44px; display: grid; place-items: center; }
    .find { width: 219px; height: 31px; margin: -1px 3.5px 0 2.5px; border-radius: 16px; background: #f9f9e2; box-shadow: 0 0 0 .8px #d8d698, 0 1px 1px #c4c48a; display: flex; align-items: center; padding: 0 9px 0 11.5px; font-size: 13.5px; color: #5d5e55; }
    .find span { flex: 1; margin: -1px 0 0 11.5px; }
    .app { position: relative; width: 44px; height: 47px; display: grid; place-items: center; flex: none; }
    .app svg { position: relative; top: -.5px; }
    .app.on::before { content: ""; position: absolute; inset: 4px 3px; border-radius: 4px; background: rgba(255,255,255,.55); box-shadow: 0 0 1px rgba(0,0,0,.2); }
    .app.run::after, .app.on::after { content: ""; position: absolute; bottom: 5px; left: 19px; width: 6px; height: 3px; border-radius: 2px; background: #7c8b78; }
    .app.on::after { left: 14px; width: 16px; background: #0cb4bf; }
    .tray { margin-left: auto; display: flex; align-items: center; padding-bottom: 1px; }
    .tray > span { display: grid; place-items: center; }
    .clock { width: 67px; margin-right: 19px; text-align: right; font-size: 11.5px; line-height: 16px; color: #1b1b1b; white-space: nowrap; letter-spacing: -.1px; }
    .c1 { width: 32px; } .c2 { width: 18px; } .c3 { width: 30px; }
  `];
  render() {
    return html`
      <div class="weather">${glyph(24, 26, svg`<path d="M4 23.5a5 5 0 0 1 0-9.5 6 6 0 0 1 5-6c4 0 7 1 9 5a5 5 0 0 1 1.5 10.5z" fill="#a9c1f5"/><path d="M3.5 22.8a4 4 0 0 1 3.5-6.3c3-1.5 5-.5 7 1 4-2 7 0 8 2.5 0 2-1.5 3-3.5 3.3z" fill="#d2e0fb"/><path d="M4 23.3h15" stroke="#6d93e8" stroke-width="1"/><circle cx="18.8" cy="6.3" r="7.8" fill="#c62b1d"/><text x="18.6" y="10.300" text-anchor="middle" font-family="Open Sans" font-size="11" fill="#fff">1</text>`)}<div>7°C<small>Bulutlu</small></div></div>
      <div class="start">${glyph(23, 23, svg`<defs><linearGradient id="wn" gradientUnits="userSpaceOnUse" x1="0" y1="0" x2="23" y2="23"><stop stop-color="#4cc9fb"/><stop offset="1" stop-color="#0067cf"/></linearGradient></defs><path d="M1 0h10v11H0V1zM12 0h10l1 1v10H12zM0 12h11v11H1l-1-1zM12 12h11v10l-1 1H12z" fill="url(#wn)"/>`)}</div>
      <div class="find">${glyph(15, 15, svg`<circle cx="6.5" cy="6.5" r="5.5" stroke="#26282a" stroke-width="1.7"/><path d="M10.5 10.5l4 4" stroke="#26282a" stroke-width="2"/>`)}<span>Ara</span>${glyph(38, 24, svg`<ellipse cx="19" cy="17.5" rx="18.5" ry="5.5" fill="#e7ddc9"/><path d="M5 15.5c0-2 3-2 4-4l1.5-3.5h1L13 11.5c1 2 4 2 4 4s-12 2-12 0z" fill="#9c7a63"/><path d="M10.9 4v4M21.8 1v5" stroke="#a07f68" stroke-width="1"/><path d="M11 20c0-4 5-3 6-7l2.5-4 1.5-4h1.5L24 9l2.5 4c1 4 5 3 5 7s-20.5 3.5-20.5 0z" fill="#8d6c56"/><path d="M13 18.5q8 3 17 0M15.5 15q6 2.3 12 0M18 11q4 1.5 7.5 0M6.5 15q5 2 9 0" stroke="#d9bfa5" stroke-width=".9"/>`)}</div>
      ${apps.map((a) => html`<div class="app ${a.active ? "on" : a.running ? "run" : ""}">${a.icon}</div>`)}
      <div class="tray">
        <span class="c1">${glyph(12, 7, svg`<path d="M.8 6.2L6 1l5.2 5.2" stroke="#222" stroke-width="1.4"/>`)}</span>
        <span class="c1">${glyph(16, 12, svg`<path d="M3.5 11a3 3 0 0 1-.3-5.7A4.5 4.5 0 0 1 11.5 4 3.6 3.6 0 0 1 12.5 11z" fill="#ececec" stroke="#222" stroke-width="1.3"/><path d="M2 6a4 4 0 0 1 2-1C6 .5 10.5 1 11.5 4.5 8 4 6 8.5 2 8z" fill="#8d8d8d"/>`)}</span>
        <span class="c3">${glyph(16, 12, svg`<g stroke="#222" stroke-width="1.2"><path d="M.5 4.5a10.5 10.5 0 0 1 15 0M2.8 6.8a7.4 7.4 0 0 1 10.4 0M5 9a4.3 4.3 0 0 1 6 0"/></g><circle cx="8" cy="10.5" r="1.3" fill="#222"/>`)}</span>
        <span class="c2">${glyph(16, 12, svg`<path d="M.6 4v4h2.2L6.5 11V1L2.8 4z" stroke="#222" stroke-width="1.2"/><path d="M8.5 4a3 3 0 0 1 0 4" stroke="#222"/><path d="M10.5 2.5a5 5 0 0 1 0 7M12.5 1a7.5 7.5 0 0 1 0 10" stroke="#9fae9a"/>`)}</span>
        <span class="c3">${glyph(16, 13, svg`<rect x=".8" y="3.6" width="12.5" height="8.4" rx="1.8" stroke="#1a1a1a" stroke-width="1.2"/><path d="M4 5h7.5v5.5H2.7z" fill="#1a1a1a"/><path d="M14.3 6v3.5" stroke="#1a1a1a" stroke-width="1.6"/><path d="M3 0L0 5h2l-.5 3.5 3.5-5H3z" fill="#1a1a1a"/>`)}</span>
        <div class="clock"><div>15:09</div><div>29.12.2024</div></div>
      </div>`;
  }
}

@customElement("app-root")
class AppRoot extends LitElement {
  static styles = css`
    :host { display: flex; flex-direction: column; width: 1920px; height: 1080px; overflow: hidden; background: #fff; }
    .body { flex: 1; display: flex; min-height: 0; }
  `;
  render() {
    return html`<browser-chrome></browser-chrome><div class="body"><side-nav></side-nav><balance-page></balance-page></div><task-bar></task-bar>`;
  }
}
